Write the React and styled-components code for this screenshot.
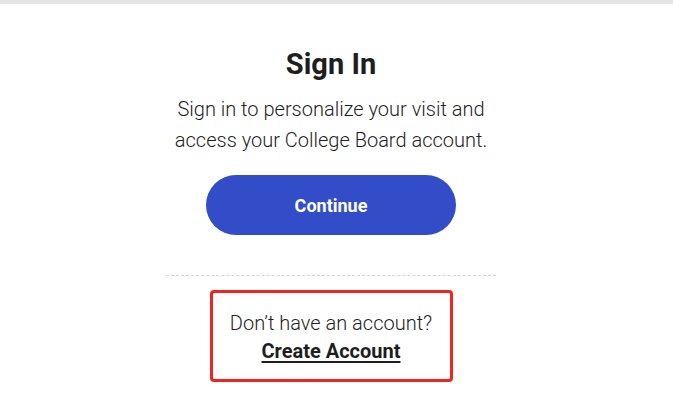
import React from "react";
import styled, { createGlobalStyle } from "styled-components";

const GlobalStyle = createGlobalStyle`
  body {
    margin: 0;
    background: #fff;
    font-family: Roboto, "Liberation Sans", sans-serif;
    color: #1e1e1e;
  }
`;

const App = () => {
  return (
    <>
      <GlobalStyle />
      <TopBar />
      <Page>
        <Card>
          <Title>Sign In</Title>
          <Lead>
            Sign in to personalize your visit and
            <br />
            access your College Board account.
          </Lead>
          <ContinueBtn>Continue</ContinueBtn>
          <Divider />
          <Highlight>
            <Prompt>Don’t have an account?</Prompt>
            <CreateLink href="#">Create Account</CreateLink>
          </Highlight>
        </Card>
      </Page>
    </>
  );
};
export default App;

const TopBar = styled.div`
  height: 4px;
  background: #e5e5e5;
`;

const Page = styled.main`
  padding: 43px 0 0 166px;
`;

const Card = styled.section`
  width: 330px;
  display: flex;
  flex-direction: column;
  align-items: center;
`;

const Title = styled.h1`
  margin: 0;
  font-size: 29px;
  line-height: 34px;
  font-weight: 700;
  color: #1e1e1e;
`;

const Lead = styled.p`
  margin: 13px 0 0;
  font-size: 20px;
  line-height: 31px;
  font-weight: 300;
  text-align: center;
  color: #1e1e1e;
  white-space: nowrap;
`;

const ContinueBtn = styled.button`
  margin-top: 19px;
  width: 250px;
  height: 60px;
  border: none;
  border-radius: 30px;
  background: #324dc7;
  color: #fff;
  font-family: Roboto, "Liberation Sans", sans-serif;
  font-size: 18px;
  font-weight: 700;
  cursor: pointer;
`;

const Divider = styled.hr`
  width: 100%;
  margin: 40px 0 0;
  border: none;
  border-top: 1px dashed #d4d4d4;
`;

const Highlight = styled.div`
  margin-top: 14px;
  width: 243px;
  height: 92px;
  box-sizing: border-box;
  padding-top: 2px;
  border: 3px solid #f5221b;
  border-radius: 4px;
  display: flex;
  flex-direction: column;
  align-items: center;
  justify-content: center;
  gap: 2px;
`;

const Prompt = styled.span`
  font-size: 20px;
  line-height: 26px;
  font-weight: 300;
`;

const CreateLink = styled.a`
  font-size: 20px;
  line-height: 26px;
  font-weight: 700;
  color: #1e1e1e;
  text-decoration: underline;
  text-underline-offset: 3px;
`;
